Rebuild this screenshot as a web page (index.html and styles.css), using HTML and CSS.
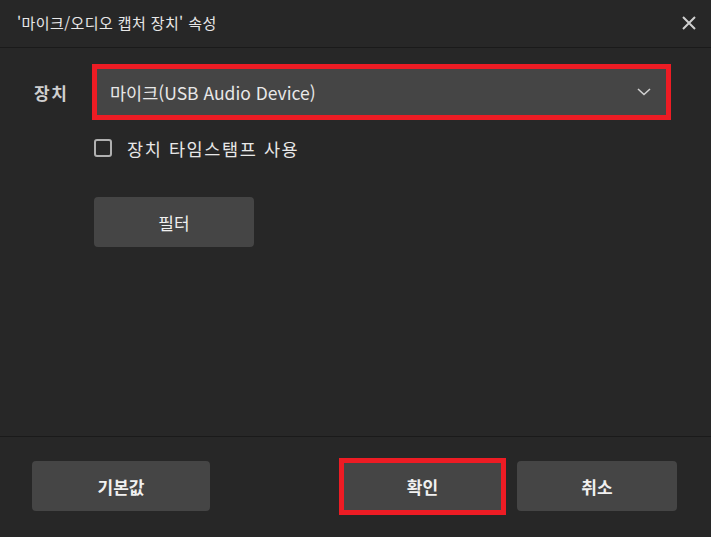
FILE: index.html
```html
<!DOCTYPE html>
<html lang="ko">

<head>
    <meta charset="UTF-8">
    <meta name="viewport" content="width=device-width, initial-scale=1.0">
    <title>'마이크/오디오 캡처 장치' 속성</title>
    <link rel="stylesheet" href="styles.css">
</head>

<body>
    <div id="dialog">
        <div class="titlebar">
            <span class="title">'마이크/오디오 캡처 장치' 속성</span>
            <span class="close">
                <svg width="16" height="16" viewBox="0 0 16 16">
                    <path d="M2 2 L14 14 M14 2 L2 14" stroke="#cfcfcf" stroke-width="2" fill="none" />
                </svg>
            </span>
        </div>

        <div id="content">
            <div class="row">
                <label class="field-label">장치</label>
                <div class="select highlight">
                    <span>마이크(USB Audio Device)</span>
                    <svg class="chevron" width="14" height="8" viewBox="0 0 14 8">
                        <path d="M1 1 L7 6.5 L13 1" stroke="#d0d0d0" stroke-width="1.6" fill="none" />
                    </svg>
                </div>
            </div>

            <div class="check-row">
                <span class="checkbox"></span>
                <span>장치 타임스탬프 사용</span>
            </div>

            <button class="btn filter">필터</button>
        </div>

        <div class="footer">
            <button class="btn bold defaults">기본값</button>
            <div class="spacer"></div>
            <button class="btn bold ok">확인</button>
            <button class="btn bold cancel">취소</button>
        </div>
    </div>
</body>

</html>
```

FILE: styles.css
```css
* {
    padding: 0;
    margin: 0;
    box-sizing: border-box;
}

body {
    background-color: #272727;
    font-family: "Noto Sans CJK KR", "Noto Sans", sans-serif;
    color: #e8e8e8;
}

#dialog {
    width: 711px;
    height: 537px;
    display: flex;
    flex-direction: column;
}

.titlebar {
    height: 48px;
    border-bottom: 1px solid #1a1a1a;
    display: flex;
    align-items: center;
    padding: 0 14px 2px 17px;
    font-size: 15px;
    letter-spacing: 0.4px;
}

.title {
    flex: 1;
}

.close {
    display: flex;
}

#content {
    flex: 1;
    padding: 16px 40px 0 34px;
}

.row {
    display: flex;
    align-items: center;
}

.field-label {
    width: 58px;
    font-size: 17px;
    font-weight: bold;
    letter-spacing: 1.5px;
    color: #cfcfcf;
}

.select {
    width: 579px;
    height: 56px;
    background-color: #454545;
    display: flex;
    align-items: center;
    padding: 0 15px 0 13px;
    font-size: 17.5px;
}

.select span {
    flex: 1;
}

.highlight {
    border: 5px solid #ed1c24;
}

.check-row {
    display: flex;
    align-items: center;
    gap: 15px;
    margin: 19px 0 0 60px;
    font-size: 17.5px;
    letter-spacing: 1.6px;
    height: 18px;
}

.checkbox {
    width: 18px;
    height: 18px;
    border: 2px solid #b0b0b0;
    border-radius: 3px;
}

.btn {
    background-color: #454545;
    color: #f0f0f0;
    border: none;
    border-radius: 4px;
    font-family: inherit;
    font-size: 17px;
    height: 50px;
}

.filter {
    display: block;
    width: 160px;
    margin: 40px 0 0 60px;
}

.footer {
    height: 101px;
    border-top: 1px solid #1a1a1a;
    display: flex;
    align-items: center;
    padding: 0 34px 2px 32px;
}

.bold {
    font-weight: bold;
}

.defaults {
    width: 178px;
}

.spacer {
    flex: 1;
}

.btn.ok {
    width: 167px;
    height: 57px;
    border: 5px solid #ed1c24;
    border-radius: 0;
    margin-right: 11px;
}

.cancel {
    width: 160px;
}
```
